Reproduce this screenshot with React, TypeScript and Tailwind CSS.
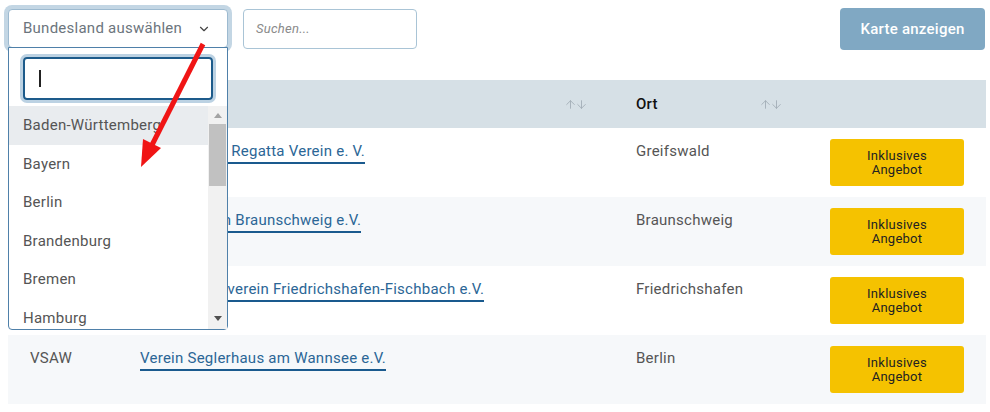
import React from 'react';
import { ChevronDown, ArrowUp, ArrowDown } from 'lucide-react';

const STATES = ['Baden-Württemberg', 'Bayern', 'Berlin', 'Brandenburg', 'Bremen', 'Hamburg'];

const ROWS = [
  { short: '', name: 'Greifswalder Regatta Verein e. V.', city: 'Greifswald' },
  { short: '', name: 'Segler-Verein Braunschweig e.V.', city: 'Braunschweig' },
  { short: '', name: 'Wassersportverein Friedrichshafen-Fischbach e.V.', city: 'Friedrichshafen' },
  { short: 'VSAW', name: 'Verein Seglerhaus am Wannsee e.V.', city: 'Berlin' },
];

const SortIcon = () => (
  <span className="flex items-center text-[#9ea9b2]">
    <ArrowUp size={13} strokeWidth={1.5} className="-mr-[2px]" />
    <ArrowDown size={13} strokeWidth={1.5} />
  </span>
);

const StateDropdown = () => (
  <div className="absolute left-0 top-[38px] z-10 flex h-[283px] w-[220px] flex-col rounded-b-[4px] border border-[#4f80a9] bg-white">
    <div className="px-[14px] pt-[9px] pb-[6px]">
      <div className="flex h-[43px] items-center rounded-[4px] border-2 border-[#1d5b8b] pl-[14px] shadow-[0_0_0_3px_#bcd2e3]">
        <span className="h-[17px] w-[2px] bg-[#222]" />
      </div>
    </div>
    <div className="flex min-h-0 flex-1">
      <ul className="flex-1 overflow-hidden">
        {STATES.map((s, i) => (
          <li
            key={s}
            className={`flex h-[38.6px] items-center pl-[14px] text-[15px] text-[#555] ${i === 0 ? 'bg-[#e9ecef]' : ''}`}
          >
            {s}
          </li>
        ))}
      </ul>
      <div className="flex w-[19px] flex-col items-center bg-[#f1f1f1]">
        <div className="mt-[7px] h-0 w-0 border-x-[4px] border-b-[5px] border-x-transparent border-b-[#a3a3a3]" />
        <div className="mt-[6px] h-[62px] w-[17px] bg-[#c1c1c1]" />
        <div className="flex-1" />
        <div className="mb-[8px] h-0 w-0 border-x-[4px] border-t-[5px] border-x-transparent border-t-[#505050]" />
      </div>
    </div>
  </div>
);

export default function App() {
  return (
    <div className="relative h-[412px] w-[990px] overflow-hidden bg-white font-['Roboto',sans-serif] tracking-[0.25px]">
      <div className="flex items-start pt-2 pr-[5px] pl-2">
        <div className="relative mt-px w-[220px]">
          <div className="flex h-[39px] items-center justify-between rounded-[4px] border border-[#9dbad0] bg-white pr-[16px] pl-[14px] shadow-[0_0_0_4px_#c3d6e4]">
            <span className="text-[15px] text-[#6c757d]">Bundesland auswählen</span>
            <ChevronDown size={14} strokeWidth={2} className="text-[#444]" />
          </div>
          <StateDropdown />
        </div>
        <div className="mt-px ml-[15px] flex h-10 w-[174px] items-center rounded-[4px] border border-[#a9c4d6] pl-3">
          <span className="text-[13px] text-[#8a8a8a] italic">Suchen...</span>
        </div>
        <button className="ml-auto h-[42px] w-[145px] rounded-[4px] bg-[#80a8c3] text-[15px] font-medium text-white">
          Karte anzeigen
        </button>
      </div>

      <div className="mx-2 mt-[30px] w-[978px]">
        <div className="grid h-12 grid-cols-[110px_496px_194px_178px] items-center bg-[#d6e0e6] text-[15px] font-medium text-[#111]">
          <div className="pl-[22px]" />
          <div className="flex items-center justify-between pr-[26px] pl-[22px]">
            <span>Name</span>
            <SortIcon />
          </div>
          <div className="flex items-center justify-between pr-[25px] pl-[22px]">
            <span>Ort</span>
            <SortIcon />
          </div>
          <div />
        </div>
        {ROWS.map((r, i) => (
          <div
            key={r.name}
            className={`grid h-[69px] grid-cols-[110px_496px_194px_178px] items-start text-[15px] ${i % 2 === 1 ? 'bg-[#f6f8fa]' : 'bg-white'}`}
          >
            <div className="pt-[13px] pl-[22px] leading-5 text-[#555]">{r.short}</div>
            <div className="pt-[13px] pl-[22px] leading-5">
              <a className="border-b-2 border-[#1a5a8e] pb-[2px] text-[#2b6696]">{r.name}</a>
            </div>
            <div className="pt-[13px] pl-[22px] leading-5 text-[#555]">{r.city}</div>
            <div className="pt-[11px] pl-[22px]">
              <div className="flex h-[47px] w-[134px] items-center justify-center rounded-[3px] bg-[#f5c200] text-center text-[13px] leading-[14px] text-[#222]">
                Inklusives
                <br />
                Angebot
              </div>
            </div>
          </div>
        ))}
      </div>

      {/* annotation arrow */}
      <svg className="pointer-events-none absolute top-0 left-0 z-20" width="990" height="412">
        <line x1="203" y1="44" x2="152" y2="145" stroke="#f01515" strokeWidth="5" />
        <polygon points="141,167 161,148 143,139" fill="#f01515" />
      </svg>
    </div>
  );
}
